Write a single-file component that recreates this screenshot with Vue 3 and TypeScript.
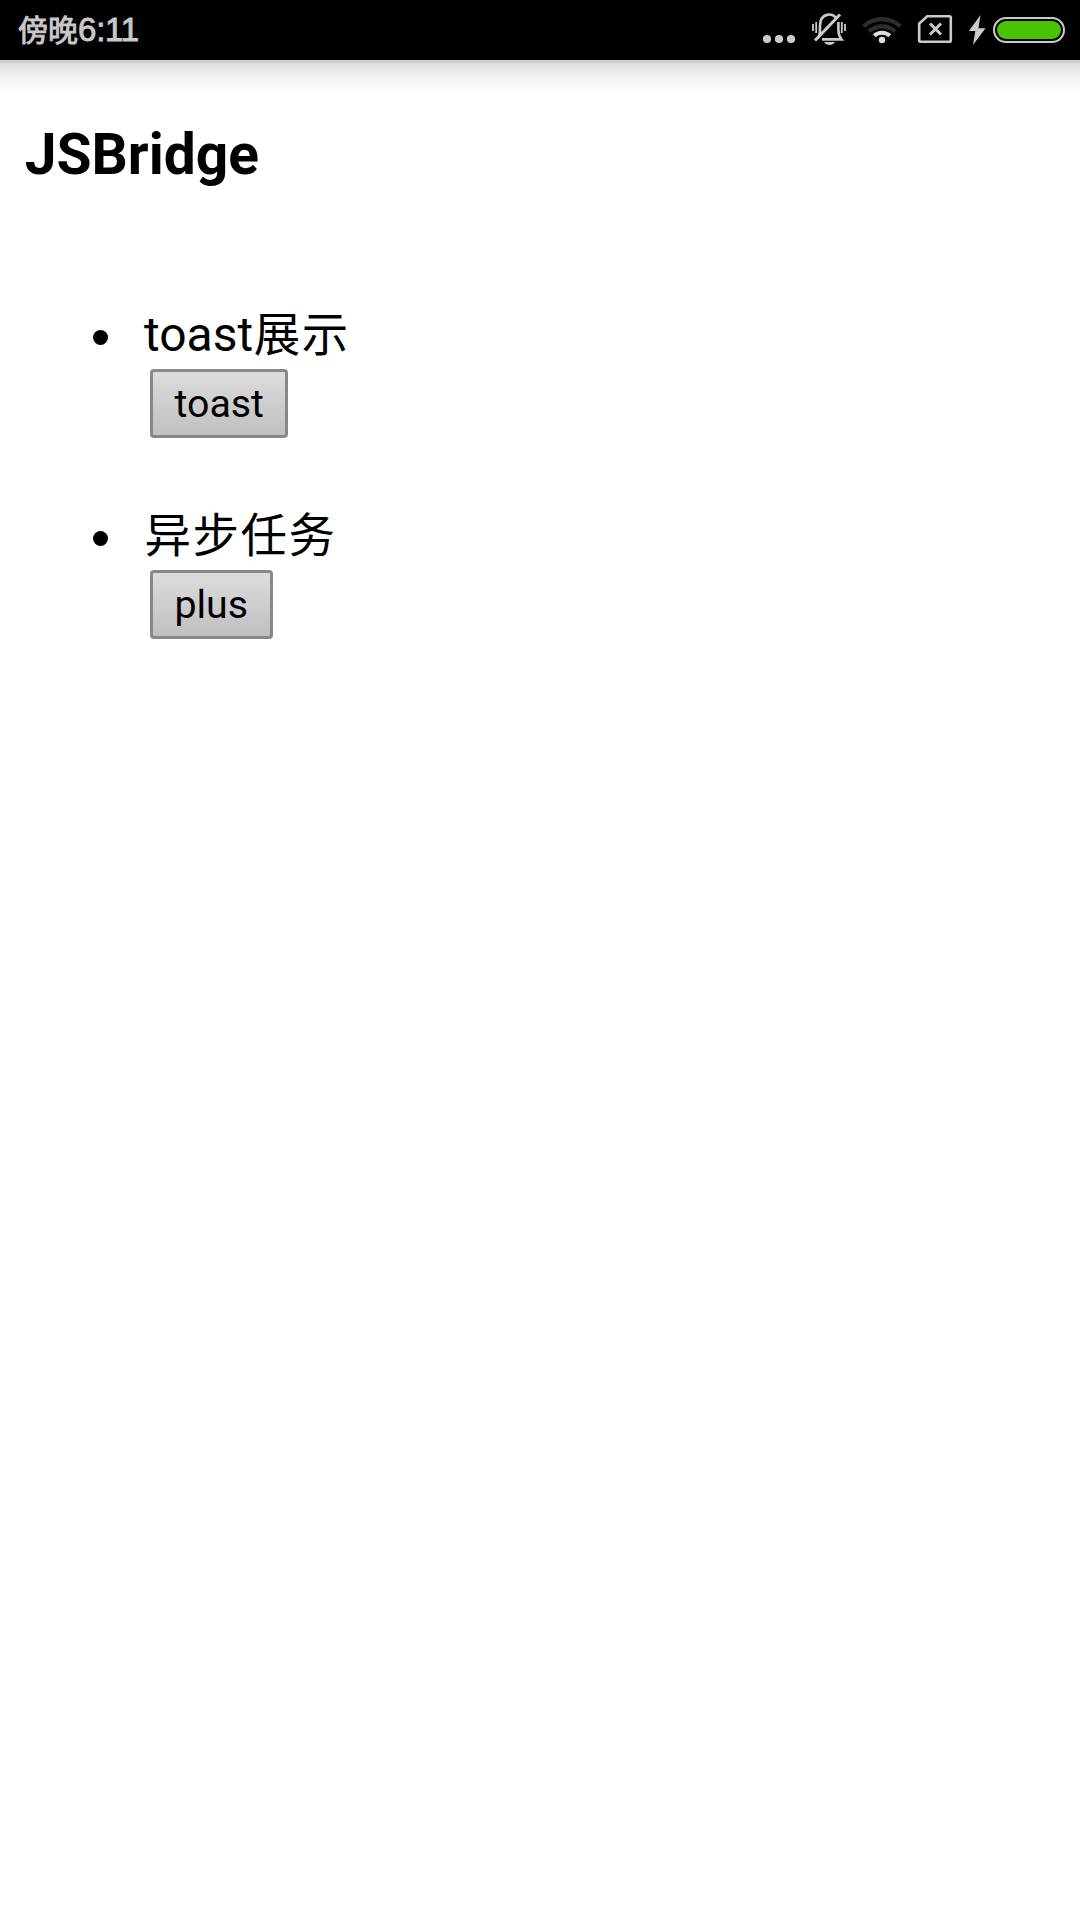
<script setup lang="ts">
interface Task {
  latin: string
  han: string
  action: string
}

const tasks: Task[] = [
  { latin: 'toast', han: '展示', action: 'toast' },
  { latin: '', han: '异步任务', action: 'plus' },
]
</script>

<template>
  <div class="screen">
    <header class="status">
      <div class="time"><span class="period">傍晚</span><span class="clock">6:11</span></div>
      <svg class="icons" width="320" height="60" viewBox="760 0 320 60">
        <g fill="#cbcbcb">
          <circle cx="767" cy="39" r="4.1" />
          <circle cx="779" cy="39" r="4.1" />
          <circle cx="791" cy="39" r="4.1" />
        </g>
        <g fill="none" stroke="#cbcbcb" stroke-width="2.6">
          <path d="M817.5 38.5C820 35.5 820 33 820 26C820 12.5 833 12.5 836 18" />
          <path d="M838.4 22V30C838.4 34 839 36 841.5 39.4H822" />
          <path d="M815 40.5L840 14.5" stroke-width="3" />
          <path d="M813 24V31M816.2 22V33M841.8 22V33M845 24V31" stroke-width="1.8" />
        </g>
        <path d="M824 42H835Q833 45 829.5 45Q826 45 824 42Z" fill="#cbcbcb" />
        <g fill="none" stroke-width="4.2">
          <path d="M863.6 26.3A27 27 0 0 1 900.4 26.3" stroke="#2d2d2d" />
          <path d="M869 31.5A19.2 19.2 0 0 1 895 31.5" stroke="#2d2d2d" />
          <path d="M874.2 35.8A11.5 11.5 0 0 1 889.8 35.8" stroke="#dedede" />
        </g>
        <circle cx="882" cy="40" r="3.2" fill="#dedede" />
        <g fill="none" stroke="#cbcbcb">
          <path d="M927.2 16.2H949.3Q950.8 16.2 950.8 17.7V40.3Q950.8 41.8 949.3 41.8H920.7Q919.2 41.8 919.2 40.3V23.6Z" stroke-width="2.6" />
          <path d="M930 23.5L941 34.5M941 23.5L930 34.5" stroke-width="3" />
        </g>
        <path d="M980.5 15L968.8 31H975.3L973 45L985.5 28.3H978.5Z" fill="#cbcbcb" />
        <rect x="994" y="18" width="70" height="24" rx="12" fill="none" stroke="#cbcbcb" stroke-width="2" />
        <rect x="997" y="21" width="64" height="18" rx="9" fill="#49c404" />
      </svg>
    </header>
    <main class="page">
      <h3>JSBridge</h3>
      <ul>
        <li v-for="task in tasks" :key="task.action">
          <div class="title">{{ task.latin }}<span class="han">{{ task.han }}</span></div>
          <button type="button">{{ task.action }}</button>
        </li>
      </ul>
    </main>
  </div>
</template>

<style>
body {
  margin: 0;
  background: #fff;
}
</style>

<style scoped>
.screen {
  min-height: 1920px;
  background: #fff;
  color: #000;
  font-family: Roboto, "Noto Sans CJK SC", sans-serif;
}
.status {
  display: flex;
  justify-content: space-between;
  height: 60px;
  background: #000;
}
.time {
  display: flex;
  padding-left: 18px;
  color: #c8c8c8;
  white-space: nowrap;
}
.period {
  width: 60px;
  font: 30px/56px "Noto Sans CJK SC", sans-serif;
  -webkit-text-stroke: 0.9px #c8c8c8;
}
.clock {
  font: 33px/59px "Liberation Sans", sans-serif;
  letter-spacing: -0.2px;
  -webkit-text-stroke: 0.9px #c8c8c8;
}
.icons {
  display: block;
}
.page {
  box-sizing: border-box;
  padding: 62px 24px 0;
  background: linear-gradient(#d0d0d0 0, #d0d0d0 3px, #dedede 3px, #f1f1f1 16px, #fbfbfb 28px, #fff 38px) no-repeat 0 0 / 100% 38px;
}
h3 {
  margin: 0 0 0 0.7px;
  font-size: 56.9px;
  line-height: 66px;
  font-weight: 700;
}
ul {
  margin: 0;
  padding: 118px 0 0 120px;
  list-style: none;
}
li {
  position: relative;
  height: 201px;
}
li::before {
  content: "";
  position: absolute;
  left: -51px;
  top: 24px;
  width: 15px;
  height: 15px;
  border-radius: 50%;
  background: #000;
}
.title {
  height: 63px;
  font-size: 48px;
  line-height: 58px;
}
.han {
  margin-left: 0.5px;
  font-size: 46.5px;
  letter-spacing: 1.5px;
}
button {
  display: block;
  box-sizing: border-box;
  height: 69px;
  margin: 0 0 0 6px;
  padding: 1px 21.5px 0;
  border: 3px solid #888;
  border-radius: 4px;
  background: linear-gradient(#dcdcdc, #c0c0c0);
  color: #000;
  font: 39.3px/62px Roboto, sans-serif;
}
</style>
